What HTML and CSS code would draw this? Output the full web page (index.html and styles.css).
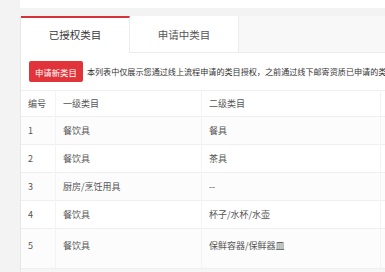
FILE: index.html
```html
<!DOCTYPE html>
<html lang="zh-CN">
<head>
    <meta charset="UTF-8">
    <meta name="viewport" content="width=device-width, initial-scale=1.0">
    <title>类目授权</title>
    <link rel="stylesheet" href="styles.css">
</head>
<body>
    <div class="top-strip"></div>
    <div class="card">
        <div class="tabs">
            <div class="tab active">已授权类目</div>
            <div class="tab">申请中类目</div>
            <div class="tab-rest"></div>
        </div>
        <div class="toolbar">
            <button class="btn-apply">申请新类目</button>
            <span class="notice">本列表中仅展示您通过线上流程申请的类目授权，之前通过线下邮寄资质已申请的类</span>
        </div>
        <table class="cat-table">
            <thead>
                <tr>
                    <th class="col-no">编号</th>
                    <th class="col-first">一级类目</th>
                    <th class="col-second">二级类目</th>
                    <th class="col-extra"></th>
                </tr>
            </thead>
            <tbody>
                <tr><td>1</td><td>餐饮具</td><td>餐具</td><td></td></tr>
                <tr><td>2</td><td>餐饮具</td><td>茶具</td><td></td></tr>
                <tr><td>3</td><td>厨房/烹饪用具</td><td>--</td><td></td></tr>
                <tr><td>4</td><td>餐饮具</td><td>杯子/水杯/水壶</td><td></td></tr>
                <tr class="last"><td>5</td><td>餐饮具</td><td>保鲜容器/保鲜器皿</td><td></td></tr>
            </tbody>
        </table>
        <div class="card-foot"></div>
    </div>
</body>
</html>
```

FILE: styles.css
```css
html, body {
    overflow: hidden;
}

body {
    margin: 0;
    background: #f3f3f3;
    font-family: "Noto Sans CJK SC", "Microsoft YaHei", sans-serif;
    color: #333;
    width: 385px;
    height: 272px;
}

.top-strip {
    margin-left: 20px;
    height: 8px;
    background: #fff;
}

.card {
    margin: 8px 0 0 20px;
    width: 365px;
    background: #fff;
    border-left: 1px solid #e6e6e6;
    overflow: hidden;
}

.tabs {
    display: flex;
    height: 37px;
    background: #f8f8f8;
}

.tab {
    width: 109px;
    box-sizing: border-box;
    display: flex;
    align-items: center;
    justify-content: center;
    font-size: 10.5px;
    color: #555;
    background: #fff;
    border-right: 1px solid #ececec;
    border-bottom: 1px solid #ececec;
}

.tab.active {
    color: #3a3a3a;
    border-top: 2px solid #d6323a;
    border-bottom: none;
    padding-bottom: 2px;
}

.tab-rest {
    flex: 1;
    border-bottom: 1px solid #ececec;
}

.toolbar {
    display: flex;
    align-items: center;
    height: 21px;
    padding: 8px 0 8px 8px;
    white-space: nowrap;
    overflow: hidden;
}

.btn-apply {
    flex: none;
    height: 21px;
    padding: 0 6px;
    border: none;
    border-radius: 2px;
    background: #e0343a;
    color: #fff;
    font-family: inherit;
    font-size: 8.4px;
    cursor: pointer;
}

.notice {
    margin-left: 4px;
    font-size: 8.1px;
    color: #333;
}

.cat-table {
    width: 500px;
    border-collapse: collapse;
    table-layout: fixed;
    font-size: 9px;
    color: #555;
}

.cat-table th,
.cat-table td {
    height: 27px;
    padding: 0 7px;
    text-align: left;
    font-weight: normal;
    border-top: 1px solid #efefef;
    border-right: 1px solid #f3f3f3;
    white-space: nowrap;
}

.cat-table th {
    height: 25px;
}

.col-no { width: 20px; }
.col-first { width: 131px; }
.col-second { width: 164px; }

.cat-table tbody tr:nth-child(odd) {
    background: #fcfcfc;
}

.cat-table tr.last td {
    height: 33px;
    padding-bottom: 6px;
}

.card-foot {
    height: 20px;
    background: #f6f6f6;
    border-top: 1px solid #efefef;
}
```
